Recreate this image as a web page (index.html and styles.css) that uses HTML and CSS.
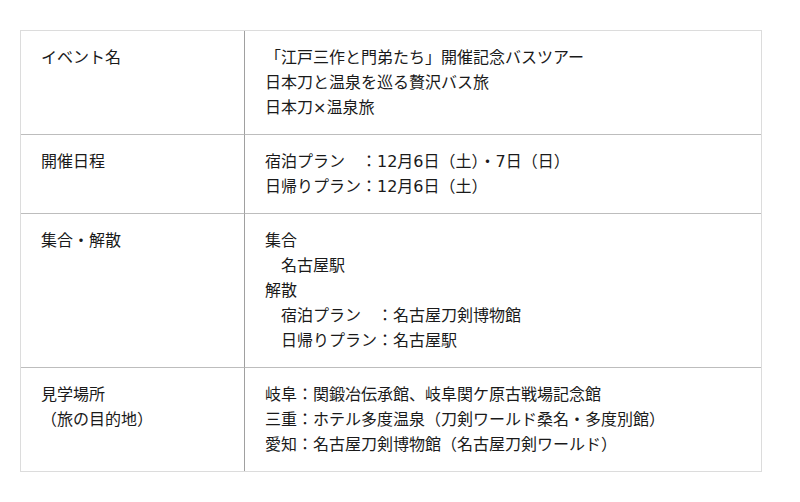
FILE: index.html
```html
<!DOCTYPE html>
<html lang="ja">
<head>
<meta charset="utf-8">
<title>開催概要</title>
<link rel="stylesheet" href="styles.css">
</head>
<body>
<div class="page">
  <table class="info">
    <tbody>
      <tr>
        <th class="label">イベント名</th>
        <td class="value">「江戸三作と門弟たち」開催記念バスツアー<br>日本刀と温泉を巡る贅沢バス旅<br>日本刀×温泉旅</td>
      </tr>
      <tr class="sep">
        <th class="label">開催日程</th>
        <td class="value">宿泊プラン　：12月6日（土）・7日（日）<br>日帰りプラン：12月6日（土）</td>
      </tr>
      <tr class="sep">
        <th class="label">集合・解散</th>
        <td class="value">集合<br><span class="indent">名古屋駅</span><br>解散<br><span class="indent">宿泊プラン　：名古屋刀剣博物館</span><br><span class="indent">日帰りプラン：名古屋駅</span></td>
      </tr>
      <tr class="sep">
        <th class="label">見学場所<br>（旅の目的地）</th>
        <td class="value">岐阜：関鍛冶伝承館、岐阜関ケ原古戦場記念館<br>三重：ホテル多度温泉（刀剣ワールド桑名・多度別館）<br>愛知：名古屋刀剣博物館（名古屋刀剣ワールド）</td>
      </tr>
    </tbody>
  </table>
</div>
</body>
</html>
```

FILE: styles.css
```css
html, body {
  margin: 0;
  padding: 0;
  background: #ffffff;
}

.page {
  padding: 30px 0 0 20px;
}

.info {
  width: 742px;
  border: 1px solid #dcdcdc;
  border-spacing: 0;
  border-collapse: separate;
  font-family: "DejaVu Sans", "Noto Sans CJK JP", sans-serif;
  font-size: 16px;
  line-height: 25px;
  color: #1a1a1a;
}

.label {
  width: 183px;
  padding: 14px 20px;
  border-right: 1px solid #a0a0a0;
  text-align: left;
  vertical-align: top;
  font-weight: normal;
}

.value {
  padding: 14px 20px;
  text-align: left;
  vertical-align: top;
}

.sep .label,
.sep .value {
  border-top: 1px solid #bdbdbd;
}

.indent {
  padding-left: 16px;
}
```
